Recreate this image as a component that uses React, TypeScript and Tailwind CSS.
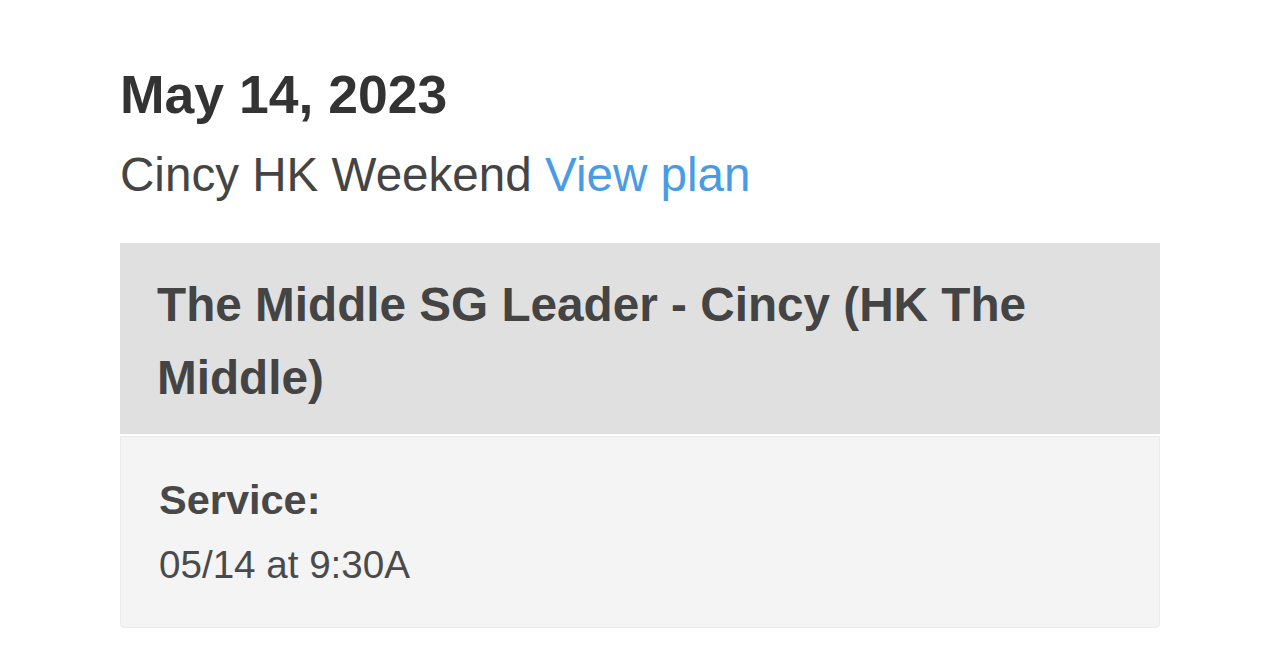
import React from "react";

const App = () => {
  return (
    <div className="min-h-[660px] bg-white font-['Liberation_Sans',Arial,sans-serif]">
      <div className="pl-[120px] pr-[120px] pt-[64px]">
        <h1 className="text-[53.5px] leading-[62px] font-bold text-[#333333]">
          May 14, 2023
        </h1>
        <p className="mt-[21px] text-[47.6px] leading-[56px] text-[#444444]">
          Cincy HK Weekend <span className="text-[#4a9be6]">View plan</span>
        </p>
        <div className="mt-[40px]">
          <div className="bg-[#e0e0e0] pl-[37px] pr-[30px] pt-[25px] pb-[20px]">
            <p className="text-[47.7px] leading-[73px] font-bold text-[#444444]">
              The Middle SG Leader - Cincy (HK The Middle)
            </p>
          </div>
          <div className="mt-[2px] bg-[#f4f4f4] border border-[#ebebeb] rounded-b-[4px] pl-[38px] pt-[39px] pb-[39px]">
            <p className="text-[41.5px] leading-[48px] font-bold text-[#484848]">
              Service:
            </p>
            <p className="mt-[18px] text-[38.6px] leading-[46px] text-[#4a4a4a]">
              05/14 at 9:30A
            </p>
          </div>
        </div>
      </div>
    </div>
  );
};

export default App;
